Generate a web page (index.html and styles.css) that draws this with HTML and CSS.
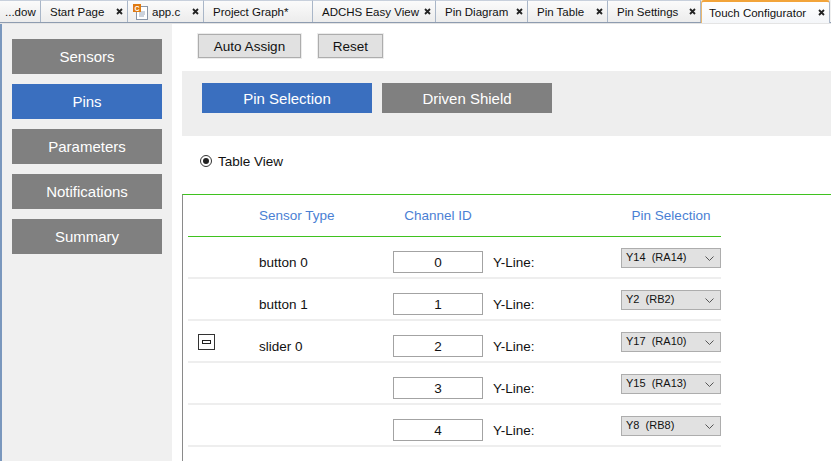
FILE: index.html
```html
<!DOCTYPE html>
<html>
<head>
<meta charset="utf-8">
<link rel="stylesheet" href="styles.css">
</head>
<body>
<div class="tabbar">
  <div class="tab first"><span class="tl">...dow</span></div>
  <div class="tab t-start"><span class="tl">Start Page</span><svg class="x" width="7" height="7" viewBox="0 0 7 7"><path d="M1 1L6 6M6 1L1 6" stroke="#222" stroke-width="1.8"/></svg></div>
  <div class="tab t-app iconed"><svg class="ficon" width="15" height="16" viewBox="0 0 15 16"><rect x="3.5" y="2.5" width="11" height="13" fill="#fff" stroke="#8a96a8"/><path d="M6 8h6M6 10h6M6 12h5" stroke="#9aa6b8"/><rect x="0" y="0" width="8" height="8" fill="#e07a10"/><text x="1.5" y="7" font-size="7" font-family="Liberation Sans" font-weight="bold" fill="#fff">C</text></svg><span class="tl">app.c</span><svg class="x" width="7" height="7" viewBox="0 0 7 7"><path d="M1 1L6 6M6 1L1 6" stroke="#222" stroke-width="1.8"/></svg></div>
  <div class="tab t-proj"><span class="tl">Project Graph*</span></div>
  <div class="tab t-adchs"><span class="tl">ADCHS Easy View</span><svg class="x" width="7" height="7" viewBox="0 0 7 7"><path d="M1 1L6 6M6 1L1 6" stroke="#222" stroke-width="1.8"/></svg></div>
  <div class="tab t-diag"><span class="tl">Pin Diagram</span><svg class="x" width="7" height="7" viewBox="0 0 7 7"><path d="M1 1L6 6M6 1L1 6" stroke="#222" stroke-width="1.8"/></svg></div>
  <div class="tab t-table"><span class="tl">Pin Table</span><svg class="x" width="7" height="7" viewBox="0 0 7 7"><path d="M1 1L6 6M6 1L1 6" stroke="#222" stroke-width="1.8"/></svg></div>
  <div class="tab t-set"><span class="tl">Pin Settings</span><svg class="x" width="7" height="7" viewBox="0 0 7 7"><path d="M1 1L6 6M6 1L1 6" stroke="#222" stroke-width="1.8"/></svg></div>
  <div class="tab t-touch active"><span class="tl">Touch Configurator</span><svg class="x" width="7" height="7" viewBox="0 0 7 7"><path d="M1 1L6 6M6 1L1 6" stroke="#222" stroke-width="1.8"/></svg></div>
</div>
<div class="content">
  <aside class="side">
    <div class="nav">Sensors</div>
    <div class="nav on">Pins</div>
    <div class="nav">Parameters</div>
    <div class="nav">Notifications</div>
    <div class="nav">Summary</div>
  </aside>
  <main class="main">
    <div class="toolbar">
      <div class="btn auto">Auto Assign</div>
      <div class="btn reset">Reset</div>
    </div>
    <div class="panel">
      <div class="seg on">Pin Selection</div>
      <div class="seg">Driven Shield</div>
    </div>
    <div class="viewrow"><span class="radio"><span class="dot"></span></span>Table View</div>
    <div class="tablewrap">
      <div class="tbl">
        <div class="row head">
          <div></div>
          <div class="h">Sensor Type</div>
          <div class="h hc">Channel ID</div>
          <div></div>
          <div class="h hc">Pin Selection</div>
        </div>
        <div class="row">
          <div></div>
          <div class="txt">button 0</div>
          <div><div class="inp">0</div></div>
          <div class="txt yl">Y-Line:</div>
          <div><div class="sel"><span>Y14&nbsp; (RA14)</span><svg width="9" height="5" viewBox="0 0 9 5"><path d="M0.5 0.5L4.5 4.5L8.5 0.5" fill="none" stroke="#555" stroke-width="1"/></svg></div></div>
        </div>
        <div class="row">
          <div></div>
          <div class="txt">button 1</div>
          <div><div class="inp">1</div></div>
          <div class="txt yl">Y-Line:</div>
          <div><div class="sel"><span>Y2&nbsp; (RB2)</span><svg width="9" height="5" viewBox="0 0 9 5"><path d="M0.5 0.5L4.5 4.5L8.5 0.5" fill="none" stroke="#555" stroke-width="1"/></svg></div></div>
        </div>
        <div class="row">
          <div class="exp"><svg width="17" height="16" viewBox="0 0 17 16"><rect x="0.5" y="0.5" width="16" height="15" fill="#fff" stroke="#333"/><rect x="4.5" y="6.5" width="8" height="3" fill="#fff" stroke="#222"/></svg></div>
          <div class="txt">slider 0</div>
          <div><div class="inp">2</div></div>
          <div class="txt yl">Y-Line:</div>
          <div><div class="sel"><span>Y17&nbsp; (RA10)</span><svg width="9" height="5" viewBox="0 0 9 5"><path d="M0.5 0.5L4.5 4.5L8.5 0.5" fill="none" stroke="#555" stroke-width="1"/></svg></div></div>
        </div>
        <div class="row">
          <div></div>
          <div class="txt"></div>
          <div><div class="inp">3</div></div>
          <div class="txt yl">Y-Line:</div>
          <div><div class="sel"><span>Y15&nbsp; (RA13)</span><svg width="9" height="5" viewBox="0 0 9 5"><path d="M0.5 0.5L4.5 4.5L8.5 0.5" fill="none" stroke="#555" stroke-width="1"/></svg></div></div>
        </div>
        <div class="row">
          <div></div>
          <div class="txt"></div>
          <div><div class="inp">4</div></div>
          <div class="txt yl">Y-Line:</div>
          <div><div class="sel"><span>Y8&nbsp; (RB8)</span><svg width="9" height="5" viewBox="0 0 9 5"><path d="M0.5 0.5L4.5 4.5L8.5 0.5" fill="none" stroke="#555" stroke-width="1"/></svg></div></div>
        </div>
      </div>
    </div>
  </main>
</div>
</body>
</html>
```
FILE: styles.css
```css
* { box-sizing: border-box; }
html, body { margin: 0; padding: 0; }
body {
  width: 831px;
  height: 462px;
  overflow: hidden;
  background: #fff;
  font-family: "Liberation Sans", Arial, sans-serif;
  color: #111;
}
.tabbar {
  display: flex;
  height: 23px;
  background: #f0f0f0;
  border-bottom: 1px solid #8e9cb0;
}
.tab {
  flex: none;
  display: flex;
  align-items: center;
  height: 22px;
  padding: 0 4px 0 9px;
  font-size: 11.5px;
  color: #111;
  background: linear-gradient(#fbfbfb, #ececec);
  border-right: 1px solid #a9b6c8;
  border-top: 1px solid #c8d0dc;
  white-space: nowrap;
}
.tab .x { margin-left: auto; }
.tab.first { padding-left: 5px; padding-right: 2px; width: 41px; }
.t-start { width: 87px; }
.t-app { width: 76px; }
.t-proj { width: 109px; }
.t-adchs { width: 123px; }
.t-diag { width: 92px; }
.t-table { width: 80px; }
.t-set { width: 93px; }
.t-touch { width: 129px; }
.tab.iconed { padding-left: 5px; }
.ficon { margin-right: 4px; }
.tab.active {
  background: linear-gradient(#ffffff, #f4f6f9);
  border-top: 2px solid #f2a43a;
  border-left: 1px solid #e9b870;
  border-right: 1px solid #a9b6c8;
  border-radius: 3px 3px 0 0;
  height: 23px;
  padding-left: 7px;
}
.content {
  display: flex;
  height: 438px;
  border-top: 1px solid #e4e4e4;
  overflow: hidden;
}
.side {
  width: 172px;
  flex: none;
  background: #f0f0f0;
  border-left: 2px solid #7a97bd;
  padding: 15px 0 0 10px;
  display: flex;
  flex-direction: column;
  gap: 10px;
}
.nav {
  width: 150px;
  height: 35px;
  flex: none;
  background: #808080;
  color: #fff;
  font-size: 15px;
  display: flex;
  align-items: center;
  justify-content: center;
}
.nav.on { background: #3a6fbf; }
.main {
  flex: 1;
  min-width: 0;
  background: #fff;
  overflow: hidden;
}
.toolbar {
  display: flex;
  gap: 17px;
  padding: 10px 0 0 26px;
}
.btn {
  height: 24px;
  border: 1px solid #adadad;
  background: #e1e1e1;
  box-shadow: 0 0 0 1px #ececec;
  font-size: 13.5px;
  display: flex;
  align-items: center;
  justify-content: center;
  color: #111;
}
.btn.auto { width: 103px; }
.btn.reset { width: 65px; }
.panel {
  margin: 13px 0 0 10px;
  height: 65px;
  background: #eeeeee;
  padding: 12px 20px;
  display: flex;
  gap: 10px;
}
.seg {
  width: 170px;
  height: 30px;
  background: #808080;
  color: #fff;
  font-size: 15px;
  display: flex;
  align-items: center;
  justify-content: center;
}
.seg.on { background: #3a6fbf; }
.viewrow {
  display: flex;
  align-items: center;
  gap: 6px;
  margin-top: 16px;
  padding-left: 28px;
  height: 18px;
  font-size: 13.5px;
}
.radio {
  width: 12px;
  height: 12px;
  border: 1px solid #333;
  border-radius: 50%;
  background: #fff;
  display: flex;
  align-items: center;
  justify-content: center;
}
.dot {
  width: 6px;
  height: 6px;
  border-radius: 50%;
  background: #222;
}
.tablewrap {
  margin: 24px 0 0 10px;
  height: 270px;
  border-top: 1px solid #3fc21f;
  border-left: 1px solid #8a8a8a;
  padding-left: 5px;
}
.tbl { width: 533px; }
.row {
  display: grid;
  grid-template-columns: 71px 134px 90px 138px 100px;
  height: 42px;
  border-bottom: 2px solid #eeeeee;
  align-items: start;
}
.row.head {
  height: 42px;
  border-bottom: 1px solid #3fc21f;
  align-items: center;
}
.h {
  font-size: 13.5px;
  color: #4a7fd4;
}
.hc { text-align: center; }
.txt {
  font-size: 13.5px;
  margin-top: 18px;
  line-height: 16px;
}
.yl { padding-left: 10px; }
.inp {
  margin-top: 14px;
  width: 90px;
  height: 22px;
  border: 1px solid #a3a3a3;
  background: #fff;
  font-size: 13.5px;
  display: flex;
  align-items: center;
  justify-content: center;
}
.sel {
  margin-top: 11px;
  width: 100px;
  height: 20px;
  border: 1px solid #adadad;
  background: #e1e1e1;
  font-size: 11px;
  display: flex;
  align-items: center;
  justify-content: space-between;
  padding: 0 6px 0 4px;
}
.sel span { margin-top: -2px; }
.exp { margin: 13px 0 0 10px; height: 16px; }
.exp svg { display: block; }
```
